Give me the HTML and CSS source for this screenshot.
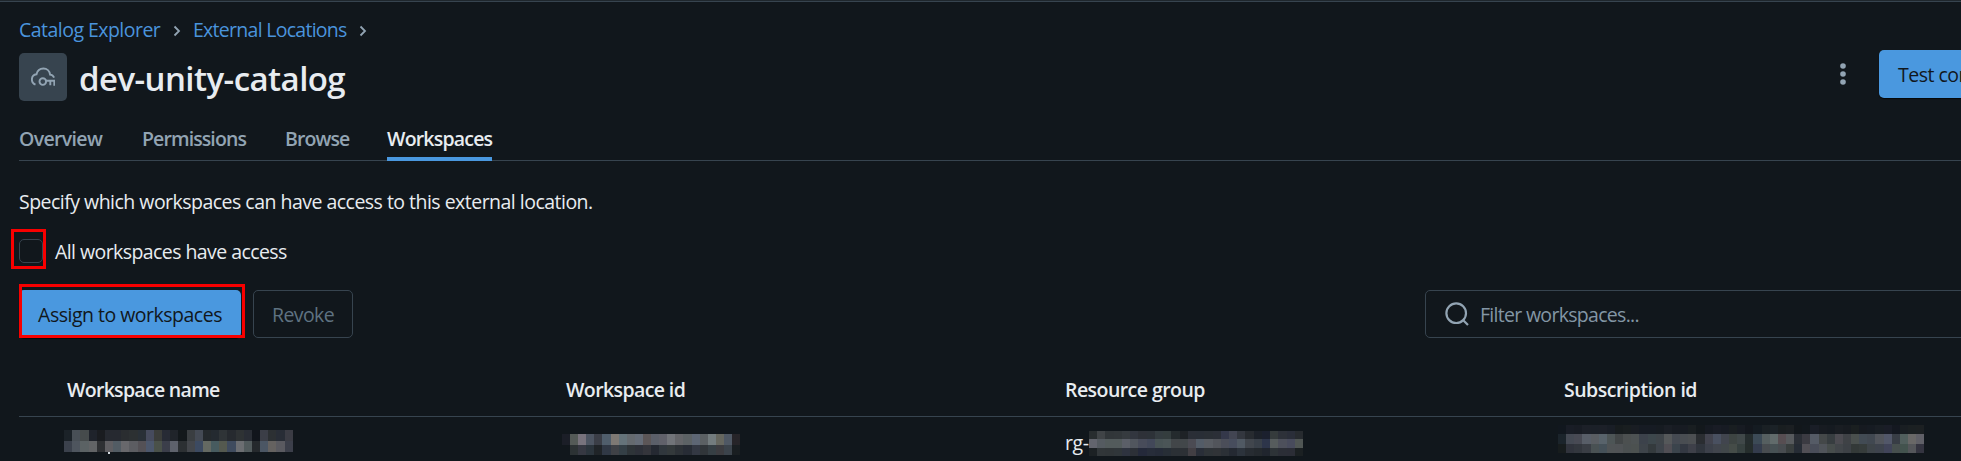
FILE: index.html
```html
<!DOCTYPE html>
<html lang="en">
<head>
<meta charset="utf-8">
<title>dev-unity-catalog</title>
<link rel="stylesheet" href="styles.css">
</head>
<body>
<main class="page">
  <nav class="crumbs">
    <a class="crumb crumb-first">Catalog Explorer</a>
    <svg class="chevron" viewBox="0 0 8 12"><path d="M1.500 1.500 6 6l-4.500 4.500"/></svg>
    <a class="crumb crumb-second">External Locations</a>
    <svg class="chevron" viewBox="0 0 8 12"><path d="M1.500 1.500 6 6l-4.500 4.500"/></svg>
  </nav>
  <header class="head">
    <div class="entity-icon">
      <svg viewBox="0 0 24 20"><path d="M4.500 17.600C2.300 16.700.9 14.800.9 12.500c0-2.700 2-4.800 4.600-5.200C6.300 3.700 9.100 1.500 12.400 1.500c3.500 0 6.300 2.600 6.700 6.100 1.800.2 3.300 1.300 4 3"/><circle cx="11.800" cy="14.600" r="3.300"/><path d="M15 13.800h8.300v5M19.300 13.800v4.400"/></svg>
    </div>
    <h1 class="title">dev-unity-catalog</h1>
    <svg class="kebab" viewBox="0 0 6 22"><circle cx="3" cy="3" r="2.800"/><circle cx="3" cy="11" r="2.800"/><circle cx="3" cy="19" r="2.800"/></svg>
    <button class="btn primary test">Test connection</button>
  </header>
  <nav class="tabs">
    <a class="tab t1">Overview</a><a class="tab t2">Permissions</a><a class="tab t3">Browse</a><a class="tab t4 active">Workspaces</a>
  </nav>
  <p class="hint">Specify which workspaces can have access to this external location.</p>
  <label class="check"><span class="box"></span><span class="check-text">All workspaces have access</span></label>
  <div class="toolbar">
    <button class="btn primary assign">Assign to workspaces</button>
    <button class="btn revoke">Revoke</button>
    <div class="filter">
      <svg viewBox="0 0 24 24"><circle cx="11.200" cy="11.200" r="9.800"/><path d="m18 18 5 5"/></svg>
      <span class="filter-text">Filter workspaces...</span>
    </div>
  </div>
  <div class="row header">
    <span class="h1c">Workspace name</span><span class="h2c">Workspace id</span><span class="h3c">Resource group</span><span class="h4c">Subscription id</span>
  </div>
  <div class="row data">
    <div class="cell"><div class="mosaic m1" data-rows="name"></div></div>
    <div class="cell"><div class="mosaic m2" data-rows="id"></div></div>
    <div class="cell"><span class="rg">rg-</span><div class="mosaic m3" data-rows="group"></div></div>
    <div class="cell"><div class="mosaic m4" data-rows="sub"></div></div>
  </div>
</main>
<script src="mosaic.js"></script>
</body>
</html>
```
FILE: styles.css
```css
* { box-sizing: border-box; }
body { margin: 0; background: #11171c; color: #e8ecf0; font: 19.5px/28px "Open Sans", "Noto Sans", sans-serif; overflow: hidden; }
.page { height: 461px; border-top: 1px solid #1f272d; box-shadow: inset 0 1px #37444f; padding-left: 19px; overflow: hidden; }
.crumbs { display: flex; align-items: center; height: 28px; margin-top: 15px; color: #4a94dc; white-space: nowrap; }
.crumb-first { width: 154px; letter-spacing: -0.53px; }
.crumb-second { width: 166px; letter-spacing: -0.72px; }
.chevron { width: 8px; height: 12px; margin: 2px 12px 0 0; fill: none; stroke: #92a4b3; stroke-width: 1.8; }
.head { display: flex; height: 57px; padding-top: 6px; align-items: flex-start; }
.entity-icon { width: 48px; height: 48px; margin-top: 3px; border-radius: 5px; background: #37444f; display: flex; align-items: center; justify-content: center; }
.entity-icon svg { width: 24px; height: 20px; fill: none; stroke: #92a4b3; stroke-width: 1.9; }
.title { margin: 7px 0 0 12px; font-size: 33px; line-height: 44px; font-weight: 600; letter-spacing: -0.56px; white-space: nowrap; }
.kebab { width: 6px; height: 22px; margin: 13px 33px 0 auto; fill: #92a4b3; }
.btn { height: 48px; font: inherit; border-radius: 5px; border: 1px solid #37444f; background: none; padding: 2px 0 0; white-space: nowrap; flex: none; letter-spacing: -0.5px; }
.primary { background: #4a98df; border: 0; color: #11171c; box-shadow: 0 1px 1px #05080a; }
.test { width: 82px; padding-left: 19px; text-align: left; overflow: hidden; border-radius: 5px 0 0 5px; }
.tabs { display: flex; height: 60px; border-bottom: 1px solid #37444f; font-weight: 600; color: #92a4b3; }
.tab { height: 60px; padding-top: 24px; white-space: nowrap; }
.t1 { width: 123px; letter-spacing: -0.65px; }
.t2 { width: 143px; letter-spacing: -0.9px; }
.t3 { width: 102px; letter-spacing: -0.9px; }
.t4 { width: 105px; letter-spacing: -0.8px; }
.active { color: #e8ecf0; border-bottom: 4px solid #4a98df; }
.hint { margin: 27px 0 0; height: 28px; white-space: nowrap; letter-spacing: -0.52px; }
.check { display: flex; align-items: center; height: 28px; margin-top: 21px; gap: 12px; }
.check-text { padding-top: 1px; letter-spacing: -0.57px; }
.box { position: relative; width: 24px; height: 24px; border: 1px solid #37444f; border-radius: 5px; }
.box::after { content: ""; position: absolute; inset: -11px -4px -7px -9px; border: 3px solid #f80000; }
.toolbar { display: flex; margin-top: 25px; height: 48px; }
.assign { position: relative; width: 222px; margin-right: 12px; }
.assign::after { content: ""; position: absolute; inset: -6px -4px 0 0; border: 3px solid #f80000; }
.revoke { width: 100px; color: #5f7281; letter-spacing: -0.6px; }
.filter { display: flex; align-items: center; width: 560px; height: 48px; margin-left: auto; margin-right: -24px; border: 1px solid #37444f; border-radius: 5px; padding-left: 19px; color: #8396a5; }
.filter svg { width: 24px; height: 24px; margin-right: 11px; fill: none; stroke: #92a4b3; stroke-width: 2.200; }
.filter-text { padding-top: 2px; letter-spacing: -0.7px; }
.row { display: grid; grid-template-columns: 499px 499px 499px 1fr; padding-left: 48px; white-space: nowrap; }
.header { height: 79px; padding-top: 38px; border-bottom: 1px solid #37444f; font-weight: 600; }
.h1c { letter-spacing: -0.7px; }
.h2c { letter-spacing: -0.6px; }
.h3c { letter-spacing: -0.55px; }
.h4c { letter-spacing: -0.5px; }
.cell { display: flex; height: 45px; }
.rg { padding-top: 12px; width: 24px; letter-spacing: -0.4px; }
.mosaic { display: grid; flex: none; }
.m1 { position: relative; width: 229px; height: 22px; margin: 13px 0 0 -3px; }
.m1::after { content: ""; position: absolute; left: 44px; top: 22px; width: 2px; height: 2px; background: #d5dde2; }
.m2 { width: 178px; height: 21px; margin: 17px 0 0 -4px; }
.m3 { width: 214px; height: 25px; margin-top: 14px; }
.m4 { width: 366px; height: 28px; margin: 8px 0 0 -6px; }
.mosaic-row { display: flex; }
.mosaic-row span { flex: 1; }
```
FILE: mosaic.js
```js
// Pixelated blocks that hide the private values of the table row.
const blocks = {
  name: [
    "1b2228 484f56 464b4c 1f232b 1a1c20 262930 262930 2a2d30 2c3032 293037 464b5d 3b3d3a 272b35 20242a 13181b 3a3e41 444a54 24292c 242a30 2f3437 262a2f 2e3234 292d35 11151c 3b3e47 2c3033 282d36 3b3c44",
    "3b414c 4e555e 5b6264 626466 2e3033 5f5e62 525c64 68686c 5c5d62 545156 4c576c 4a5149 3b3e4a 5e626c 2c3033 43464b 3c4a61 646962 475b5f 54594f 3f4b5e 6c6e72 525b5d 25292d 4b5664 656260 5a5a60 3c3f4a"
  ],
  id: [
    "1b1e27 545a57 78737d 4d5562 3b3e47 505e6c 7e7974 65737a 656a6f 656c77 5c5657 5b5f69 60616a 717479 646569 5c6265 5d6674 5b6063 737c7e 66675f 4f5864 262428",
    "11171c 2c3234 363842 2b343c 202428 303845 3f4146 343f46 2e3438 2d3038 34353b 252932 30373d 33393b 2c3136 272c35 333843 303539 363f44 3c3c40 3b434b 191e21"
  ],
  group: [
    "282d2f 404447 313639 32373a 363b3f 32363f 2e3138 2d3238 343c40 343d3e 242a2d 1e2226 2a2e36 292e36 2a2f35 2b2f37 34384a 424552 33373f 272b30 1c2129 1b202e 353b3c 2d3139 2a2e39 272b2f",
    "63656e 555b61 535b5c 535b5c 5b5f68 51565e 484c5a 424859 485355 4b5557 424649 42474a 4b4b53 535c67 585c62 52555b 4b4e59 474d5d 505963 41464d 394049 2d354a 565c5d 4d505b 484b5c 505654",
    "1c2124 313639 303538 30363a 2e333f 2c3037 24293a 272d3a 252b38 272e36 2b3035 2c3035 423f44 292e38 2e3337 303337 2b3036 242932 2c333c 272c32 24292e 20252e 2d3337 2b2e36 2b2d36 1b2022"
  ],
  sub: [
    "11171e 191d26 181c24 1c2028 1b2028 1c2028 191e26 171c1e 191e20 191d23 161b23 161b23 161b21 1a1e25 171b22 171b22 191e21 13181c 161a22 191c25 171b23 191e21 171b22 13171d 141b21 1a2024 1b2227 191e20 1b1f22 12171b 12181d 1a1e27 171b21 151a20 191d22 171b20 1a1f20 161a20 161b22 191e24 1a1d27 141820 191e22 1b2022 1c2022",
    "1b242b 444953 484a54 585e68 595d62 58636b 4d5556 424647 4c5050 4d5253 3c424b 3d474c 3f454a 55585a 454a52 494d52 4c4f52 2a2d31 42434e 495060 41454e 3d4442 404849 252d2e 3c4a56 565f60 616b6b 574e52 575a5d 2b2f36 3b3b42 555b66 444849 373d40 4c4b51 3f4246 4a504e 424b54 414851 52555c 525769 383d45 515f5d 696867 606067",
    "171c1d 30333c 33373e 3a3e45 495153 455159 505456 505356 4b5051 4c5150 3e444a 343a3d 3e444b 504e54 3b444c 333842 3e4049 30353d 3c404a 41454d 41474a 454c48 36403f 252d2c 343c4d 484c50 475154 484c50 393e3e 262c35 514f55 494d59 50545a 474d4c 42464a 3d4146 333938 363c3b 3e4449 3e434d 414459 474f4e 43534e 54565a 343440"
  ]
};

for (const mosaic of document.querySelectorAll(".mosaic")) {
  for (const colors of blocks[mosaic.dataset.rows]) {
    const row = document.createElement("div");
    row.className = "mosaic-row";
    for (const color of colors.split(" ")) {
      const block = document.createElement("span");
      block.style.background = "#" + color;
      row.append(block);
    }
    mosaic.append(row);
  }
}
```
